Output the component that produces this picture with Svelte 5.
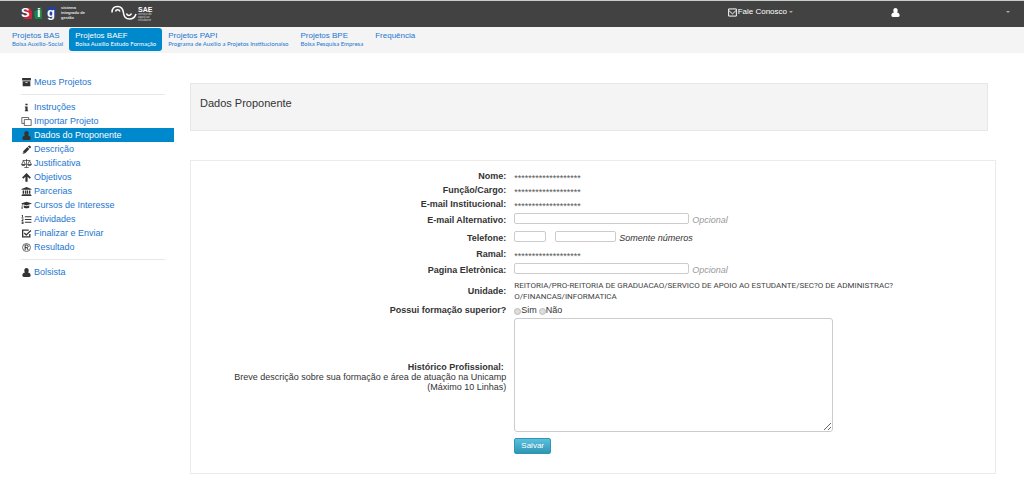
<script lang="ts">
  type Tab = { title: string; sub?: string };
  type Item = { icon: string; text: string };

  const tabs: Tab[] = [
    { title: "Projetos BAS", sub: "Bolsa Auxílio-Social" },
    { title: "Projetos BAEF", sub: "Bolsa Auxílio Estudo Formação" },
    { title: "Projetos PAPI", sub: "Programa de Auxílio a Projetos Institucionaiso" },
    { title: "Projetos BPE", sub: "Bolsa Pesquisa Empresa" },
    { title: "Frequência" },
  ];
  let activeTab = $state("Projetos BAEF");

  const groups: Item[][] = [
    [{ icon: "archive", text: "Meus Projetos" }],
    [
      { icon: "info", text: "Instruções" },
      { icon: "clone", text: "Importar Projeto" },
      { icon: "user", text: "Dados do Proponente" },
      { icon: "pencil", text: "Descrição" },
      { icon: "balance", text: "Justificativa" },
      { icon: "arrow", text: "Objetivos" },
      { icon: "bank", text: "Parcerias" },
      { icon: "cap", text: "Cursos de Interesse" },
      { icon: "list", text: "Atividades" },
      { icon: "check", text: "Finalizar e Enviar" },
      { icon: "registered", text: "Resultado" },
    ],
    [{ icon: "user", text: "Bolsista" }],
  ];
  let activeItem = $state("Dados do Proponente");

  const masked = "*******************";
  let superior = $state("");
</script>

{#snippet icon(name: string)}
  <svg class="icon" viewBox="0 0 20 16" aria-hidden="true">
    {#if name === "archive"}
      <path fill-rule="evenodd" d="M2 0h16v4.500H2zM3 5.500h14V15H3zM8 7v1.500h4V7z" />
    {:else if name === "info"}
      <path d="M8 1h4v3H8zM7 6h5v7h1v2H7v-2h1V8H7z" />
    {:else if name === "clone"}
      <path class="line" d="M6 4.500h12.500v11H6zM14 4V.800H1.500v10.700H6" />
    {:else if name === "user"}
      <path d="M10 0c2.600 0 4 1.800 4 4.300 0 1.500-.5 2.800-1.300 3.700 3.300 0 4.800 2.500 4.800 5.500 0 1.500-1 2.500-2.500 2.500H5c-1.500 0-2.500-1-2.500-2.500 0-3 1.500-5.500 4.800-5.500C6.500 7.100 6 5.800 6 4.300 6 1.800 7.400 0 10 0z" />
    {:else if name === "pencil"}
      <path fill-rule="evenodd" d="M3 15.500l1-4.500L11.500 3.500l3.700 3.700L7.700 14.600zM12.500 2.500L14 1q1-1 2 0l1.700 1.700q1 1 0 2L16.200 6.200zM4.800 12.200l-.4 1.900 1.800-.5z" />
    {:else if name === "balance"}
      <path class="line" d="M10 0v15M6 15.200h8M3 2.500h14M4.500 3L1 10h7zM15.500 3L12 10h7z" />
      <path d="M.5 10h8c-.5 3-7.500 3-8 0zM11.500 10h8c-.5 3-7.500 3-8 0z" />
    {:else if name === "arrow"}
      <path d="M10 0l8 8-2.200 2.200L12 6.500V15.500H8V6.500l-3.800 3.700L2 8z" />
    {:else if name === "bank"}
      <path d="M10 0l9 3.500V5H1V3.500zM3 6h2.500v6H3zM7 6h2.500v6H7zM10.500 6H13v6h-2.500zM14.500 6H17v6h-2.500zM2 12.500h16V14H2zM1 14.500h18V16H1z" />
    {:else if name === "cap"}
      <path d="M10 1l10 3.500L10 8 3.500 5.700C2.800 6.500 2.500 7.500 2.500 9l.7 5H.800l.7-5c0-1.500.2-2.800.8-3.700L0 4.500zM5 7.800l5 1.700 5-1.700V11c0 2.500-10 2.500-10 0z" />
    {:else if name === "list"}
      <path d="M7 2h12v2H7zM7 7h12v2H7zM7 12h12v2H7zM2 0h1.500v4H4.500v1H1V4h1V1.500H1zM1 6h3.500v2.500L2.500 10h2v1H1V9.500L3 8V7H1zM1 12h3.500v4H1v-1h2v-.500H1.500v-1H3V13H1z" />
    {:else if name === "check"}
      <path class="heavy" d="M16 9v5H3V2h11M6 7l3.500 3.500L18 2.500" />
    {:else if name === "registered"}
      <circle class="line" cx="10" cy="8" r="7.200" />
      <path class="heavy thin" d="M7.500 12.500v-9h3c3.500 0 3.500 4.500 0 4.500h-3M10.500 8l2.500 4.500" />
    {:else if name === "mail"}
      <path class="heavy thin" d="M3 1.500h14v13H3zM4 5l6 5.500L16 5" />
    {/if}
  </svg>
{/snippet}

<header class="topbar">
  <div class="brand">
    <svg class="sig" viewBox="0 0 36 14">
      <path fill="#c72440" d="M3 2h6l2 4v7H2l3-4z" />
      <path fill="#17864b" d="M13 6l7-5 1 4v8h-7z" />
      <path fill="#263f9d" d="M26 1h9v9l-5 3-3-4z" />
      <text x="0" y="11">S</text>
      <text x="16" y="11">i</text>
      <text x="26" y="11">g</text>
    </svg>
    <p class="tag">sistema<br />integrado de<br />gestão</p>
  </div>
  <div class="sae">
    <svg class="wave" viewBox="0 0 26 16" aria-hidden="true">
      <path d="M1 7.500C1 3 3.500 1.500 6.500 1.500S12 3.500 12.500 8s3 6 6 6S24 12 25 9M4.500 6.500c.5-2.500 3.500-2.500 4.500 0M15.500 8.500c.5 2.500 4 2.500 5 0" />
    </svg>
    <div>
      <strong>SAE</strong>
      <p>serviço de<br />apoio ao<br />estudante</p>
    </div>
  </div>
  <nav class="tools">
    <button type="button">{@render icon("mail")}Fale Conosco<i class="caret"></i></button>
    <button type="button" class="account" aria-label="Conta">{@render icon("user")}<i class="caret"></i></button>
  </nav>
</header>

<nav class="tabs">
  {#each tabs as tab (tab.title)}
    <a href="#projetos" class:active={tab.title === activeTab} onclick={() => (activeTab = tab.title)}>
      {tab.title}
      {#if tab.sub}<small>{tab.sub}</small>{/if}
    </a>
  {/each}
</nav>

<div class="page">
  <aside>
    {#each groups as group, g (g)}
      {#if g > 0}<hr />{/if}
      <ul>
        {#each group as item (item.text)}
          <li>
            <a href="#menu" class:active={item.text === activeItem} onclick={() => (activeItem = item.text)}>
              {@render icon(item.icon)}{item.text}
            </a>
          </li>
        {/each}
      </ul>
    {/each}
  </aside>

  <main>
    <h1>Dados Proponente</h1>

    <form onsubmit={(e) => e.preventDefault()}>
      <div class="row"><span class="label">Nome:</span><span class="masked">{masked}</span></div>
      <div class="row"><span class="label">Função/Cargo:</span><span class="masked">{masked}</span></div>
      <div class="row"><span class="label">E-mail Institucional:</span><span class="masked">{masked}</span></div>
      <div class="row tall">
        <label class="label" for="email">E-mail Alternativo:</label>
        <div class="value"><input id="email" class="wide" type="text" /><em class="muted">Opcional</em></div>
      </div>
      <div class="row tall">
        <label class="label" for="ddd">Telefone:</label>
        <div class="value">
          <input id="ddd" class="ddd" type="text" />
          <input class="phone" type="text" aria-label="Número do telefone" />
          <em>Somente números</em>
        </div>
      </div>
      <div class="row"><span class="label">Ramal:</span><span class="masked">{masked}</span></div>
      <div class="row tall">
        <label class="label" for="site">Pagina Eletrònica:</label>
        <div class="value"><input id="site" class="wide" type="text" /><em class="muted">Opcional</em></div>
      </div>
      <div class="row unit">
        <span class="label">Unidade:</span>
        <span class="path">
          REITORIA/PRO-REITORIA DE GRADUACAO/SERVICO DE APOIO AO ESTUDANTE/SEC?O DE ADMINISTRAC?<wbr />O/FINANCAS/INFORMATICA
        </span>
      </div>
      <div class="row" role="radiogroup" aria-labelledby="superior">
        <span class="label" id="superior">Possui formação superior?</span>
        <div class="radios">
          <label><input type="radio" name="superior" value="sim" bind:group={superior} />Sim</label>
          <label><input type="radio" name="superior" value="nao" bind:group={superior} />Não</label>
        </div>
      </div>
      <div class="row">
        <label class="history" for="history">
          <b>Histórico Profissional:&nbsp;</b><br />
          Breve descrição sobre sua formação e área de atuação na Unicamp<br />
          (Máximo 10 Linhas)
        </label>
        <textarea id="history"></textarea>
      </div>
      <div class="row actions"><button type="submit">Salvar</button></div>
    </form>
  </main>
</div>

<style>
  :global(body) {
    background: #fff;
    color: #333;
    font: 9px/14px "Liberation Sans", Arial, sans-serif;
  }
  p,
  ul,
  h1 {
    margin: 0;
    padding: 0;
  }
  a {
    color: #1b76d1;
    text-decoration: none;
  }
  button,
  input,
  textarea {
    box-sizing: border-box;
    font-family: inherit;
  }
  .icon {
    flex: none;
    width: 11px;
    height: 9px;
    fill: currentColor;
  }
  .line,
  .heavy {
    fill: none;
    stroke: currentColor;
    stroke-width: 1.300;
  }
  .heavy {
    stroke-width: 2.400;
  }
  .thin {
    stroke-width: 1.800;
  }

  .topbar {
    display: flex;
    align-items: flex-start;
    height: 26px;
    padding: 0 14px 0 21px;
    border-top: 1px solid #c9cdca;
    background: #424242;
    color: #fff;
  }
  .brand,
  .sae {
    display: flex;
    align-items: flex-start;
    gap: 4px;
    padding-top: 4px;
  }
  .sig {
    width: 36px;
    height: 14px;
    margin-top: 1px;
    fill: #fff;
    font-size: 13px;
    font-weight: bold;
  }
  .tag {
    width: 50px;
    font-size: 4px;
    font-weight: bold;
    line-height: 5px;
    color: #e4e4e4;
    white-space: nowrap;
  }
  .sae {
    gap: 1px;
  }
  .wave {
    width: 26px;
    height: 16px;
    fill: none;
    stroke: #fff;
    stroke-width: 1.500;
  }
  .sae strong {
    display: block;
    margin-top: 1px;
    font-size: 7px;
    line-height: 7px;
  }
  .sae p {
    font-size: 3px;
    line-height: 3px;
    color: #d0d0d0;
  }
  .tools {
    display: flex;
    gap: 97px;
    margin-left: auto;
    padding-top: 4px;
  }
  .tools button {
    display: flex;
    align-items: center;
    padding: 0;
    border: 0;
    background: none;
    color: #fff;
    font-size: 8px;
    line-height: 14px;
  }
  .tools .account {
    width: 120px;
    justify-content: space-between;
  }
  .caret {
    margin-left: 2px;
    border: 2px solid transparent;
    border-top-color: #aaa;
    border-bottom: 0;
  }

  .tabs {
    display: flex;
    padding: 1px 6px 2px;
    background: #f4f4f4;
  }
  .tabs a {
    height: 20px;
    padding: 3px 6px 0;
    border-radius: 3px;
    font-size: 8px;
    line-height: 10px;
    white-space: nowrap;
  }
  .tabs small {
    display: block;
    font-family: Lato, "Liberation Sans", Arial, sans-serif;
    font-size: 6px;
    line-height: 6px;
  }
  .tabs .active {
    background: #0088cc;
    color: #fff;
  }

  .page {
    display: flex;
    gap: 16px;
    padding: 22px 28px 18px 12px;
  }
  aside {
    flex: none;
    width: 162px;
  }
  ul {
    list-style: none;
  }
  aside a {
    display: flex;
    align-items: center;
    gap: 2px;
    padding-left: 9px;
    line-height: 14px;
  }
  aside .icon {
    color: #333;
  }
  aside .active {
    background: #0088cc;
    color: #fff;
  }
  hr {
    height: 1px;
    margin: 5px 9px;
    border: 0;
    background: #e8e8e8;
  }

  main {
    flex: 1;
    min-width: 0;
    padding-top: 8px;
  }
  h1 {
    margin-right: 8px;
    padding: 12px 9px 20px;
    border: 1px solid #e7e7e7;
    background: #f4f4f4;
    font-size: 11px;
    font-weight: normal;
    line-height: 14px;
  }
  form {
    margin-top: 29px;
    padding: 8px 8px 19px;
    border: 1px solid #ebebeb;
  }
  .row {
    display: grid;
    grid-template-columns: 39% minmax(0, 1fr);
    column-gap: 8px;
    align-items: center;
    min-height: 14px;
  }
  .tall {
    min-height: 18px;
  }
  .label {
    font-weight: bold;
    line-height: 12px;
    text-align: right;
  }
  .masked {
    padding-top: 4px;
    color: #555;
    line-height: 10px;
  }
  .value {
    display: flex;
    align-items: center;
    gap: 3px;
  }
  .value input {
    height: 11px;
    margin: 0 0 3px;
    padding: 0 2px;
    border: 1px solid #ccc;
    border-radius: 2px;
    background: #fff;
    font-size: 8px;
  }
  .wide {
    width: 175px;
  }
  .value .ddd {
    width: 32px;
    margin-right: 6px;
  }
  .phone {
    width: 61px;
  }
  .muted {
    color: #999;
  }
  .unit {
    min-height: 24px;
  }
  .path {
    max-width: 400px;
    color: #444;
    font-family: Roboto, "Liberation Sans", Arial, sans-serif;
    font-size: 8px;
    line-height: 11px;
  }
  .radios {
    display: flex;
    gap: 2px;
  }
  .radios label {
    display: flex;
    align-items: center;
    line-height: 12px;
  }
  .radios input {
    appearance: none;
    width: 7px;
    height: 7px;
    margin: 2px 0 0;
    border: 1px solid #bbb;
    border-radius: 50%;
    background: #ddd;
  }
  .radios input:checked {
    background: #555;
  }
  .history {
    padding-top: 4px;
    line-height: 10px;
    text-align: right;
  }
  textarea {
    width: 319px;
    height: 114px;
    margin-top: 1px;
    border: 1px solid #ccc;
    border-radius: 3px;
    font-size: 9px;
  }
  .actions {
    margin-top: 6px;
  }
  .actions button {
    grid-column: 2;
    justify-self: start;
    height: 16px;
    padding: 0 6px;
    border: 1px solid #2f96b4;
    border-radius: 2px;
    background: linear-gradient(#5bc0de, #2f96b4);
    color: #fff;
    font-size: 8px;
    line-height: 14px;
  }
</style>
